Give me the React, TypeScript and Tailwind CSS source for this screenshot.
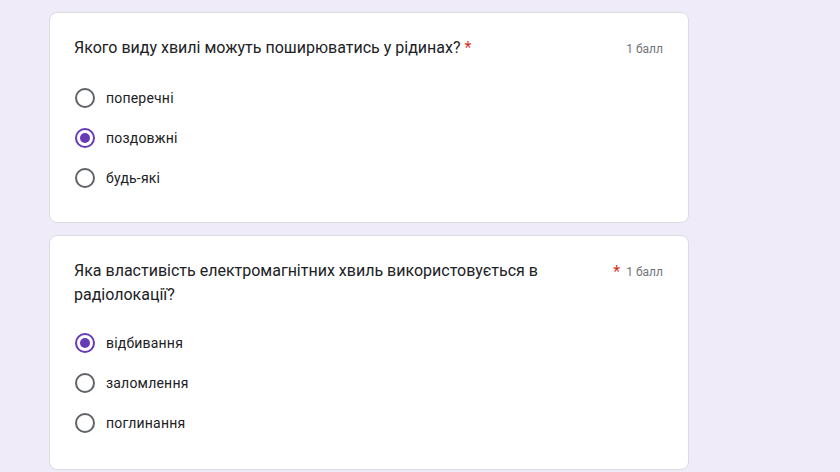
import React from 'react';

interface Question {
  title: string;
  options: string[];
  selected: number;
  starInline: boolean;
  gap: string;
  bottom: string;
}

const questions: Question[] = [
  {
    title: 'Якого виду хвилі можуть поширюватись у рідинах?',
    options: ['поперечні', 'поздовжні', 'будь-які'],
    selected: 1,
    starInline: true,
    gap: 'mt-[17px]',
    bottom: 'pb-[24px]',
  },
  {
    title: 'Яка властивість електромагнітних хвиль використовується в радіолокації?',
    options: ['відбивання', 'заломлення', 'поглинання'],
    selected: 0,
    starInline: false,
    gap: 'mt-[16px]',
    bottom: 'pb-[26px]',
  },
];

const Radio: React.FC<{ checked: boolean }> = ({ checked }) => (
  <span
    className={`flex h-5 w-5 shrink-0 items-center justify-center rounded-full border-2 ${
      checked ? 'border-[#673ab7]' : 'border-[#5f6368]'
    }`}
  >
    {checked && <span className="h-[10px] w-[10px] rounded-full bg-[#673ab7]" />}
  </span>
);

const QuestionCard: React.FC<{ q: Question }> = ({ q }) => (
  <div className={`rounded-lg border border-[#dadce0] bg-white pl-[24px] pr-[25px] pt-[23px] ${q.bottom}`}>
    <div className="flex items-start justify-between gap-4">
      <div className="max-w-[475px] text-[16px] leading-[24px] text-[#202124]">
        {q.title}
        {q.starInline && <span className="ml-[4px] text-[#d93025]">*</span>}
      </div>
      <div className="flex shrink-0 items-center pt-[1px] text-[12px] leading-[24px] text-[#70757a]">
        {!q.starInline && <span className="mr-[6px] text-[16px] text-[#d93025]">*</span>}
        1 балл
      </div>
    </div>
    <div className={`flex flex-col ${q.gap}`}>
      {q.options.map((opt, i) => (
        <div key={opt} className="flex h-10 items-center">
          <span className="ml-[1px]">
            <Radio checked={i === q.selected} />
          </span>
          <span className="ml-[11px] text-[14px] leading-5 tracking-[0.2px] text-[#202124]">{opt}</span>
        </div>
      ))}
    </div>
  </div>
);

export default function App() {
  return (
    <div
      className="min-h-[472px] w-full bg-[#f0ebf8] pt-[12px]"
      style={{ fontFamily: 'Roboto, "Noto Sans", sans-serif' }}
    >
      <div className="ml-[49px] flex w-[640px] flex-col gap-[12px]">
        {questions.map((q) => (
          <QuestionCard key={q.title} q={q} />
        ))}
      </div>
    </div>
  );
}
